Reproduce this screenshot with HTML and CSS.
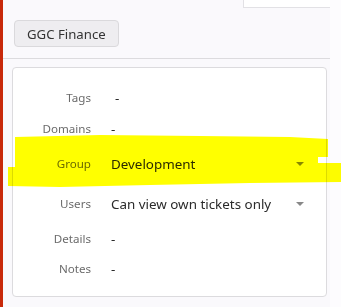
FILE: index.html
```html
<!DOCTYPE html>
<html lang="en">
  <head>
    <meta charset="UTF-8" />
    <meta name="viewport" content="width=device-width, initial-scale=1.0" />
    <title>GGC Finance</title>
    <link rel="stylesheet" href="styles.css">
  </head>
  <body>
    <div class="accent"></div>
    <div class="panel">
      <div class="topbar"><div class="topbox"></div></div>
      <div class="header">
        <button class="button">GGC Finance</button>
      </div>
      <div class="card">
        <div class="row first">
          <div class="label">Tags</div>
          <div class="value dash">-</div>
        </div>
        <div class="row">
          <div class="label">Domains</div>
          <div class="value">-</div>
        </div>
        <div class="row select-row">
          <div class="label">Group</div>
          <div class="value select">Development<span class="caret"></span></div>
        </div>
        <div class="row select-row">
          <div class="label">Users</div>
          <div class="value select">Can view own tickets only<span class="caret"></span></div>
        </div>
        <div class="row">
          <div class="label">Details</div>
          <div class="value">-</div>
        </div>
        <div class="row">
          <div class="label">Notes</div>
          <div class="value">-</div>
        </div>
      </div>
    </div>
    <div class="side"></div>

    <!-- highlighter mark -->
    <svg class="marker" width="341" height="307" viewBox="0 0 341 307">
      <polygon
        points="15,137 100,135 200,136 290,137 328,139 328,157 318,157 318,163 341,163 341,182 250,183 150,185 60,187 8,186 8,167 15,167"
        fill="#ffff00"
      />
    </svg>
  </body>
</html>
```

FILE: styles.css
```css
body {
  font-family: "Noto Sans", "Open Sans", sans-serif;
  margin: 0;
  padding: 0;
  display: flex;
  height: 307px;
  overflow: hidden;
  background-color: #fff;
  position: relative;
}
.accent {
  width: 3px;
  background-color: #c8290a;
}
.panel {
  width: 327px;
  background-color: #faf9fc;
}
.side {
  flex: 1;
  background-color: #fdfcfe;
}
.topbar {
  height: 8px;
  display: flex;
  justify-content: flex-end;
}
.topbox {
  width: 86px;
  height: 7px;
  background-color: #fff;
  border-left: 1px solid #e2e1e5;
  border-bottom: 1px solid #e2e1e5;
}
.header {
  display: flex;
  padding: 12px 0 11px 11px;
  border-bottom: 1px solid #dcdbde;
}
.button {
  font-family: inherit;
  font-size: 13.2px;
  color: #333;
  background-color: #eeedf0;
  border: 1px solid #dad9dc;
  border-radius: 4px;
  height: 27px;
  padding: 0 12px;
}
.card {
  margin: 8px 3px 0 9px;
  padding: 14px 0 13px 0;
  background-color: #fff;
  border: 1px solid #dcdbde;
  border-radius: 4px;
}
.row {
  display: flex;
  align-items: center;
  height: 30px;
  padding-top: 1px;
  box-sizing: border-box;
}
.row.first {
  height: 31px;
  padding-top: 0;
}
.select-row {
  height: 40px;
}
.label {
  width: 78px;
  text-align: right;
  font-size: 11.6px;
  color: #6b6b6b;
}
.value {
  margin-left: 20px;
  font-size: 13.4px;
  color: #2a2a2a;
  flex: 1;
}
.dash {
  padding-left: 4px;
}
.select {
  display: flex;
  align-items: center;
  justify-content: space-between;
  padding-right: 22px;
}
.caret {
  width: 0;
  height: 0;
  border-left: 4px solid transparent;
  border-right: 4px solid transparent;
  border-top: 4px solid #888;
}
.marker {
  position: absolute;
  left: 0;
  top: 0;
  mix-blend-mode: multiply;
  pointer-events: none;
}
```
